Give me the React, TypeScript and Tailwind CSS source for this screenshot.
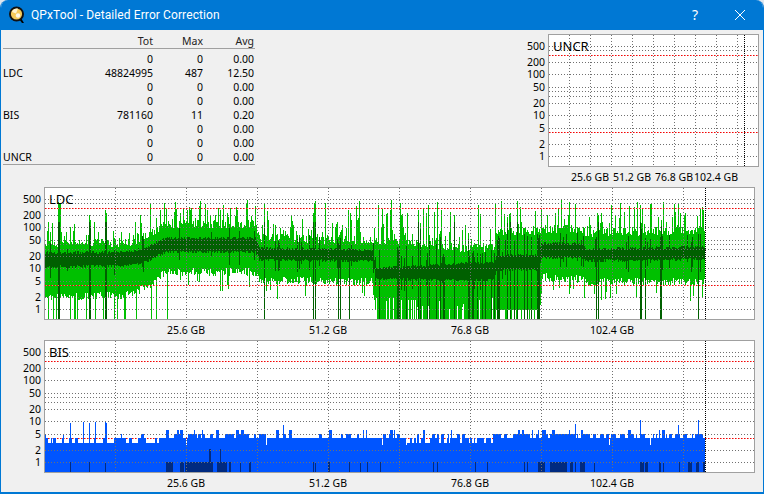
import React from "react";

const rng = (seed: number) => () => {
  seed |= 0;
  seed = (seed + 0x6d2b79f5) | 0;
  let t = Math.imul(seed ^ (seed >>> 15), 1 | seed);
  t = (t + Math.imul(t ^ (t >>> 7), 61 | t)) ^ t;
  return ((t ^ (t >>> 14)) >>> 0) / 4294967296;
};

const GRID = [500, 400, 200, 100, 50, 40, 30, 20, 10, 5, 2, 1];
const TICKS = [500, 200, 100, 50, 20, 10, 5, 2, 1];
const yOf = (top: number, v: number) => Math.round(top + 122.3 - 41 * Math.log10(v));

type Seg = [number, number, number, number, number];
// x, light top, light bottom, dark top, dark bottom
const SEGS: Seg[] = [
  [45, 243, 297, 253, 267],
  [125, 243, 295, 252, 266],
  [145, 238, 288, 248, 262],
  [165, 224, 272, 238, 252],
  [255, 224, 272, 238, 252],
  [259, 238, 280, 248, 260],
  [372, 240, 282, 250, 261],
  [376, 241, 319, 268, 279],
  [470, 248, 319, 263, 280],
  [494, 248, 319, 263, 280],
  [496, 232, 312, 255, 270],
  [538, 232, 312, 255, 270],
  [541, 229, 277, 243, 258],
  [583, 229, 279, 244, 258],
  [586, 233, 282, 249, 261],
  [705, 230, 282, 247, 259],
];
const seg = (x: number, i: number) => {
  for (let s = 0; s < SEGS.length - 1; s++) {
    const a = SEGS[s];
    const b = SEGS[s + 1];
    if (x >= a[0] && x < b[0]) {
      const t = (x - a[0]) / (b[0] - a[0]);
      return a[i] + (b[i] - a[i]) * t;
    }
  }
  return SEGS[SEGS.length - 1][i];
};

const DARK_DROPS = [58, 59, 89, 90, 105, 106, 264, 313, 315, 338, 340, 349, 397, 418, 420, 436, 443, 510, 517, 524, 527, 531, 537, 539, 596, 598, 640, 641, 645, 660, 661, 698];
const TALL = [58, 59, 60, 89, 105, 106, 150, 164, 199, 200, 220, 264, 313, 315, 348, 314, 325, 350, 382, 391, 400, 434, 437, 480, 501, 520, 541, 561, 575, 640, 678, 697, 703];

const buildLdc = () => {
  const r = rng(42);
  let light = "";
  let dark = "";
  for (let x = 45; x < 705; x++) {
    const px = x + 0.5;
    const lt = seg(x, 1) + (r() - 0.5) * 9;
    let lb = seg(x, 2) + (r() - 0.5) * 8;
    const dt = seg(x, 3) + (r() - 0.5) * 3;
    const db = seg(x, 4) + (r() - 0.5) * 3;
    const full = x >= 376 && x < 540;
    if (x < 170 && r() < 0.16) lb = 319;
    if (!full && x >= 170 && r() < 0.1) lb = seg(x, 2) + 8 + r() * 12;
    if (full) {
      const n = r();
      lb = x > 495 ? (n < 0.35 ? 319 : 310) : n < 0.16 ? 297 + r() * 12 : 319;
      if (x >= 400 && x < 416 && n < 0.4) lb = 300;
    }
    let top = lt;
    if (r() < 0.25) top = lt - 4 - r() * 16;
    const tallOdds = x < 160 ? 0.02 : x < 376 ? 0.05 : 0.1;
    if (r() < tallOdds || TALL.includes(x)) top = 200 + r() * 16;
    light += `M${px} ${Math.round(top)}V${Math.round(lb)}`;
    dark += `M${px} ${Math.round(dt)}V${Math.round(db)}`;
    if (DARK_DROPS.includes(x) || (full && r() < 0.17)) {
      dark += `M${px} ${Math.round(db)}V319`;
      dark += `M${px} ${Math.round(Math.max(top + 6, 222))}V${Math.round(dt)}`;
    } else if (r() < 0.08) {
      dark += `M${px} ${Math.round(dt - 4 - r() * 10)}V${Math.round(db + 3 + r() * 10)}`;
    }
  }
  return { light, dark };
};

const NAVY: [number, number][] = [
  [70, 71], [89, 90], [105, 106], [166, 173], [180, 184], [185, 213], [217, 227], [229, 231], [240, 241], [249, 251],
  [313, 314], [315, 316], [328, 330], [349, 350], [360, 361], [367, 368], [380, 381], [433, 434], [437, 438],
  [475, 476], [487, 488], [524, 525], [527, 528], [538, 545], [550, 567], [570, 573], [575, 576], [580, 585], [594, 595], [640, 644], [645, 648], [659, 661], [663, 664], [679, 680], [688, 692], [696, 699], [703, 705],
];

const buildBis = () => {
  const r = rng(7);
  const yv = (v: number) => yOf(340, v);
  let blue = "";
  let x = 45;
  while (x < 705) {
    let base: number;
    let up: number;
    if (x < 162) {
      base = 3;
      up = 0.42;
    } else if (x < 262) {
      base = 4;
      up = 0.62;
    } else if (x < 403) {
      base = 4;
      up = 0.36;
    } else if (x < 493) {
      base = r() < 0.5 ? 3 : 4;
      up = 0.3;
    } else if (x < 540) {
      base = 4;
      up = 0.55;
    } else if (x < 585) {
      base = 4;
      up = 0.82;
    } else {
      base = 4;
      up = 0.48;
    }
    let v = base;
    let w = 1 + Math.floor(r() * 3);
    if (r() < up) v = r() < 0.75 ? base + 1 : base + 2;
    if (r() < 0.015) {
      v = 8 + r() * 3;
      w = 1;
    }
    if (x > 162 && r() < 0.03) {
      v = 2.6;
      w = 1;
    }
    for (let i = 0; i < w && x < 705; i++, x++) blue += `M${x + 0.5} ${yv(v)}V472`;
  }
  blue += `M70.5 ${yv(9)}V472M89.5 ${yv(9)}V472M105.5 ${yv(10)}V472M106.5 ${yv(9)}V472M640.5 ${yv(8)}V472M678.5 ${yv(8)}V472M698.5 ${yv(11)}V472`;
  let navy = "";
  for (const [a, b] of NAVY) {
    for (let c = a; c < b; c++) navy += `M${c + 0.5} ${yv(1)}V472`;
  }
  navy += `M209.5 449V472M210.5 449V472M220.5 449V472`;
  return { blue, navy };
};

const ldc = buildLdc();
const bis = buildBis();

type ChartProps = {
  title: string;
  top: number;
  left: number;
  right: number;
  originX: number;
  width: number;
  vlines: number[];
  marker: number;
  labels: [string, number][];
  redBehind?: boolean;
  children?: React.ReactNode;
};

function Chart({ title, top, left, right, originX, width, vlines, marker, labels, redBehind, children }: ChartProps) {
  const bottom = top + 132;
  const red = (
    <>
      {[300, 4].map((v) => (
        <g key={v}>
          <path d={`M${left + 1} ${yOf(top, v) + 0.5}H${right}`} stroke="#e87878" strokeDasharray="1 2" strokeDashoffset={-1} />
          <path d={`M${left + 1} ${yOf(top, v) + 0.5}H${right}`} stroke="#ff0000" strokeDasharray="1 2" />
        </g>
      ))}
    </>
  );
  return (
    <svg width={width} height={153} className="block shrink-0" style={{ fontFamily: "'Noto Sans', sans-serif" }}>
      <g transform={`translate(${-originX} ${-top})`}>
        <rect x={left} y={top} width={right - left} height={132} fill="#ffffff" />
        <g shapeRendering="crispEdges" strokeWidth={1} fill="none">
          {redBehind && red}
          {children}
          {GRID.map((v) => (
            <path key={v} d={`M${left + 1} ${yOf(top, v) + 0.5}H${right}`} stroke="#707070" strokeDasharray="1 2" />
          ))}
          {vlines.map((x) => (
            <path key={x} d={`M${x + 0.5} ${top + 1}V${bottom}`} stroke="#707070" strokeDasharray="1 2" />
          ))}
          {!redBehind && red}
          <path d={`M${marker + 0.5} ${top + 1}V${bottom}`} stroke="#000000" strokeDasharray="1 1" />
          <rect x={left + 0.5} y={top + 0.5} width={right - left} height={132} stroke="#a0a0a0" />
        </g>
        {TICKS.map((v) => (
          <text key={v} x={left - 3} y={yOf(top, v) + 4} textAnchor="end" fontSize={10.5} fill="#000">
            {v}
          </text>
        ))}
        <text x={left + 5} y={top + 17} fontSize={13} fill="#000">
          {title}
        </text>
        {labels.map(([t, x]) => (
          <text key={t} x={x} y={bottom + 15} textAnchor="middle" fontSize={10.5} fill="#000">
            {t}
          </text>
        ))}
      </g>
    </svg>
  );
}

const ROWS: [string, string, string, string][] = [
  ["", "0", "0", "0.00"],
  ["LDC", "48824995", "487", "12.50"],
  ["", "0", "0", "0.00"],
  ["", "0", "0", "0.00"],
  ["BIS", "781160", "11", "0.20"],
  ["", "0", "0", "0.00"],
  ["", "0", "0", "0.00"],
  ["UNCR", "0", "0", "0.00"],
];

const WIDE_V = [115, 186, 257, 328, 399, 470, 541, 612, 683];
const WIDE_L: [string, number][] = [
  ["25.6 GB", 186],
  ["51.2 GB", 328],
  ["76.8 GB", 470],
  ["102.4 GB", 612],
];

function AppIcon() {
  return (
    <svg width="18" height="18" viewBox="0 0 18 18" className="shrink-0">
      <path d="M11 13l3 4h2l-3-5z" fill="#000" />
      <circle cx="8.5" cy="8" r="7.5" fill="#111" />
      <circle cx="8.5" cy="8" r="5.6" fill="#f4c95a" />
      <path d="M4 6a5 5 0 0 1 6-3.4l-2 5z" fill="#fff3d0" />
      <circle cx="10" cy="9.5" r="2.2" fill="#fbf7ea" />
    </svg>
  );
}

export default function App() {
  return (
    <div className="h-[494px] w-[764px] overflow-hidden bg-[#dfe6ee]">
      <div
        className="flex h-[494px] w-[764px] flex-col overflow-hidden rounded-t-[8px] border-x border-b-2 border-[#0078d4] bg-[#f0f0f0] text-[10.5px] leading-[14px] text-black"
        style={{ fontFamily: "'Noto Sans', sans-serif" }}
      >
        <div className="flex h-[30px] shrink-0 items-center bg-[#0078d4] pl-[7px] text-white">
          <AppIcon />
          <span className="ml-[5px] text-[12px] tracking-[0.1px]" style={{ fontFamily: "Roboto, sans-serif" }}>
            QPxTool - Detailed Error Correction
          </span>
          <span className="ml-auto mr-[36px] text-[14px]">?</span>
          <svg width="12" height="12" viewBox="0 0 12 12" className="mr-[17px]">
            <path d="M1 1l10 10M11 1L1 11" stroke="#fff" strokeWidth="1" fill="none" />
          </svg>
        </div>
        <div className="flex flex-1 flex-col pt-[4px]">
          <div className="flex h-[153px] justify-between pr-[4px]">
            <div className="ml-[2px] w-[252px]">
              <div className="grid h-[15px] grid-cols-[70px_80px_50px_51px] border-b border-[#a0a0a0] text-[#222]">
                <span />
                <span className="text-right">Tot</span>
                <span className="text-right">Max</span>
                <span className="text-right">Avg</span>
              </div>
              <div className="border-b border-[#a0a0a0] pt-[3px]">
                {ROWS.map((r, i) => (
                  <div key={i} className="grid h-[14px] grid-cols-[70px_80px_50px_51px]">
                    <span>{r[0]}</span>
                    <span className="text-right">{r[1]}</span>
                    <span className="text-right">{r[2]}</span>
                    <span className="text-right">{r[3]}</span>
                  </div>
                ))}
              </div>
            </div>
            <Chart
              title="UNCR"
              top={34}
              left={549}
              right={759}
              originX={525}
              width={235}
              vlines={[570, 591, 612, 633, 654, 675, 696, 717, 738]}
              marker={745}
              labels={[
                ["25.6 GB", 591],
                ["51.2 GB", 633],
                ["76.8 GB", 675],
                ["102.4 GB", 717],
              ]}
            />
          </div>
          <Chart title="LDC" top={187} left={44} right={754} originX={1} width={758} vlines={WIDE_V} marker={705} labels={WIDE_L}>
            <path d={ldc.light} stroke="#00c000" />
            <path d={ldc.dark} stroke="#006000" />
          </Chart>
          <Chart title="BIS" top={340} left={44} right={754} originX={1} width={758} vlines={WIDE_V} marker={705} labels={WIDE_L} redBehind>
            <path d={bis.blue} stroke="#0055ff" />
            <path d={bis.navy} stroke="#002a80" />
          </Chart>
        </div>
      </div>
    </div>
  );
}
